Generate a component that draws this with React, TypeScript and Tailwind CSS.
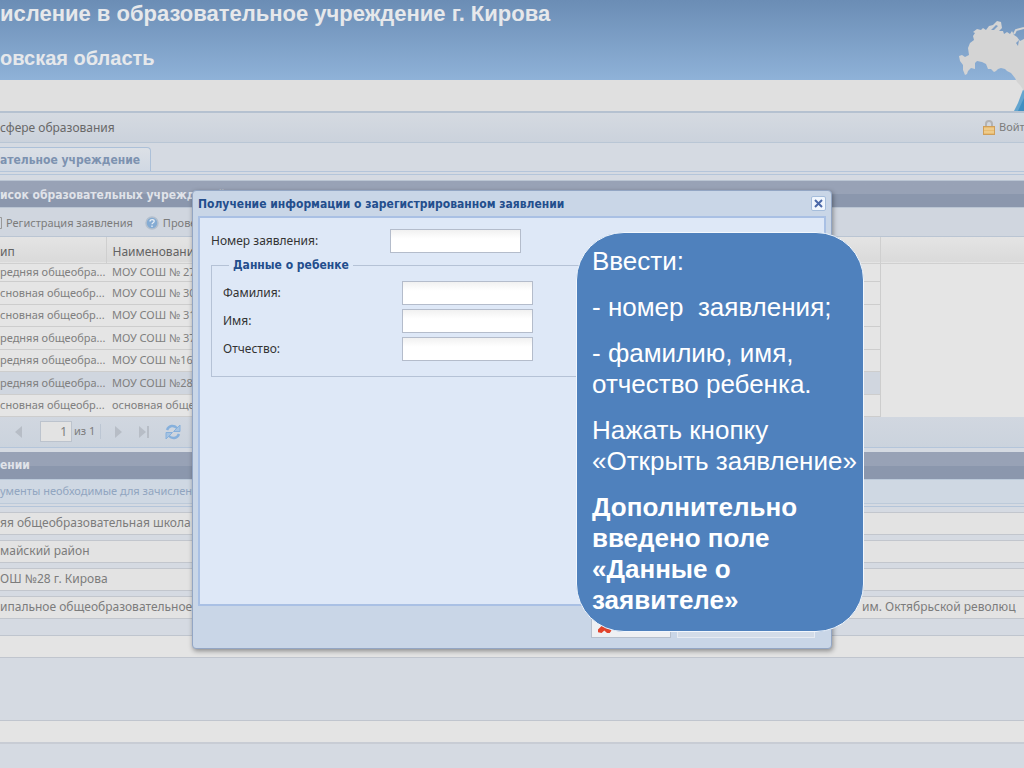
import * as React from "react";

const schools = [
  { type: "редняя общеобра...", name: "МОУ СОШ № 27" },
  { type: "сновная общеобр...", name: "МОУ СОШ № 30" },
  { type: "сновная общеобр...", name: "МОУ СОШ № 31" },
  { type: "редняя общеобра...", name: "МОУ СОШ № 37" },
  { type: "редняя общеобра...", name: "МОУ СОШ №16" },
  { type: "редняя общеобра...", name: "МОУ СОШ №28", selected: true },
  { type: "сновная общеобр...", name: "основная обще" },
];

const details = [
  { id: "kind", label: "Тип", value: "яя общеобразовательная школа" },
  { id: "district", label: "Район", value: "майский район" },
  { id: "short", label: "Краткое наименование", value: "ОШ №28 г. Кирова" },
  { id: "full", label: "Полное наименование", value: "ипальное общеобразовательное", rest: "им. Октябрьской революц" },
];

const childFields = [
  { id: "surname", label: "Фамилия:" },
  { id: "firstname", label: "Имя:" },
  { id: "patronymic", label: "Отчество:" },
];

const inputClass =
  "w-[131px] h-6 px-1 border border-[#b4bccb] bg-linear-to-b from-[#f1f1f1] to-white to-40% outline-none";

const boldClass = "text-xs font-bold font-['DejaVu_Sans_Condensed','DejaVu_Sans',sans-serif]";

function RussiaMap() {
  return (
    <svg className="absolute right-0 top-2.5" width="84" height="101" viewBox="0 0 84 101" aria-hidden="true">
      <path d="M74 101 78 93 81 85 84 77V101Z" fill="#63a5cf" />
      <path d="M78 101 84 88V101Z" fill="#3f8fc2" />
      <path
        d="M19 46 22 45 25 47 29 45 28 38 30 33 34 30 33 26 35 23 33 22 37 19 41 20 43 18 46 20 49 16 53 15 57 11 61 12 62 18 59 21 63 21 64 24 67 22 70 24 72 21 74 25 77 27 80 31 84 29V81L80 75 77 72 75 68 71 63 67 61 65 59 61 58 58 59 56 61 54 62 51 59 48 59 46 54 42 52 37 51 35 53 35 59 31 58 28 61 27 64 25 65 23 60 23 55 20 51Z"
        fill="#d4d4d4"
      />
      <path d="M51 20 56 15 58 16 54 20ZM76 33 79 30 78 36Z" fill="#7f9fc5" />
      <path d="M74 24 76 20 84 18" fill="none" stroke="#d4d4d4" strokeWidth="2" />
    </svg>
  );
}

function LockIcon() {
  return (
    <svg className="shrink-0" width="12" height="16" viewBox="0 0 12 16" aria-hidden="true">
      <path d="M3 8V4a3 3 0 0 1 6 0v4" fill="none" stroke="#b3b3b3" strokeWidth="2" />
      <rect x="0.5" y="6.5" width="11" height="8" fill="#e9bd72" stroke="#cf9f5b" />
      <path d="M1 9h10M1 12h10" stroke="#f3d9a4" />
    </svg>
  );
}

function HelpIcon() {
  return (
    <svg width="14" height="14" viewBox="0 0 14 14" aria-hidden="true">
      <circle cx="7" cy="7" r="6" fill="#84abd3" stroke="#b3bfcd" strokeWidth="1.5" />
      <path d="M5 5.500c0-2.600 4.200-2.400 4.200-.2C9.200 6.800 7 6.800 7 8.300M7 9.600v1.300" fill="none" stroke="#e8eef5" strokeWidth="1.300" />
    </svg>
  );
}

function RefreshIcon() {
  return (
    <svg width="16" height="16" viewBox="0 0 16 16" aria-hidden="true">
      <path d="M2 6C4 1 9 1 12 4" fill="none" stroke="#86b0dc" strokeWidth="2.400" />
      <path d="M15 1v6.500H8.500Z" fill="#a5c3e2" stroke="#86b0dc" />
      <path d="M14 10c-2 5-7 5-10 2" fill="none" stroke="#86b0dc" strokeWidth="2.400" />
      <path d="M1 15V8.500h6.500Z" fill="#a5c3e2" stroke="#86b0dc" />
    </svg>
  );
}

function PageArrow({ flip, end }: { flip?: boolean; end?: boolean }) {
  return (
    <svg className={flip ? "rotate-180" : ""} width="12" height="12" viewBox="0 0 12 12" aria-hidden="true">
      <path d="M2 0v12l7-6Z" fill="#b7bdc6" />
      {end && <path d="M10 0h2v12h-2Z" fill="#b7bdc6" />}
    </svg>
  );
}

function SchoolTable() {
  return (
    <table className="w-full table-fixed border-collapse text-left text-[11px] text-[#808080] bg-[#e5e5e5]">
      <colgroup>
        <col className="w-[106px]" />
        <col />
        <col className="w-[14%]" />
      </colgroup>
      <thead>
        <tr className="h-[26px] text-xs text-[#636363] bg-linear-to-b from-[#e4e4e4] to-[#dadada] border-b border-[#d0d0d0]">
          <th className="p-0 pt-1 font-normal border-r border-[#cfcfcf]">ип</th>
          <th className="px-1.5 pt-1 pb-0 font-normal border-r border-[#cfcfcf]">Наименование</th>
          <td />
        </tr>
      </thead>
      <tbody>
        {schools.map((s, i) => (
          <tr key={i} className="h-[22px] first:h-[18px] even:h-[23px] leading-[14px]">
            <td className={`p-0 border-b border-[#cdcdcd] whitespace-nowrap overflow-hidden ${s.selected ? "bg-[#d0d6df]" : ""}`}>{s.type}</td>
            <td className={`py-0 px-1.5 border-b border-r border-[#cdcdcd] whitespace-nowrap ${s.selected ? "bg-[#d0d6df]" : ""}`}>{s.name}</td>
            <td className="p-0" />
          </tr>
        ))}
      </tbody>
    </table>
  );
}

function Dialog() {
  return (
    <div
      role="dialog"
      aria-labelledby="dialog-title"
      className="absolute left-1/2 top-[190px] -translate-x-1/2 w-[640px] h-[459px] flex flex-col px-[5px] rounded-sm border border-[#93a6c4] bg-[#c9d6e7] shadow-[1px_2px_5px_rgba(0,0,0,0.4)]"
    >
      <div className="h-[25px] flex items-center justify-between">
        <h2 id="dialog-title" className={`${boldClass} text-[#234e8d]`}>
          Получение информации о зарегистрированном заявлении
        </h2>
        <button aria-label="Закрыть окно" className="size-[15px] flex items-center justify-center rounded-xs border border-[#a5bddb] bg-[#f0f6fd]">
          <svg width="9" height="9" viewBox="0 0 9 9" aria-hidden="true">
            <path d="M1 1 8 8M8 1 1 8" stroke="#4a68a8" strokeWidth="2" />
          </svg>
        </button>
      </div>
      <form className="flex-1 px-[11px] pt-[11px] border-2 border-[#a9c0e4] bg-[#dee8f7] text-xs text-[#333]">
        <div className="flex items-center">
          <label htmlFor="number" className="w-[179px]">Номер заявления:</label>
          <input id="number" className={inputClass} />
        </div>
        <fieldset className="border border-[#b5c2d6] px-[11px] pb-[15px] mt-1">
          <legend className={`ml-1.5 px-1 ${boldClass} text-[#234e8d]`}>Данные о ребенке</legend>
          <div className="flex flex-col gap-1 pt-2">
            {childFields.map((f) => (
              <div key={f.id} className="flex items-center">
                <label htmlFor={f.id} className="w-[179px]">{f.label}</label>
                <input id={f.id} className={inputClass} />
              </div>
            ))}
          </div>
        </fieldset>
      </form>
      <div className="h-[42px] pt-1.5 pr-[11px] flex justify-end gap-1.5 text-xs">
        <button className="w-20 h-[26px] flex items-center gap-1 px-1.5 border border-[#b6bfcc] bg-[#eef0f3] text-[#444]">
          <svg width="15" height="22" viewBox="0 0 15 22" aria-hidden="true">
            <path d="M1 4 5 2l3 5 3-5 3 2-4 8 5 5-2 3-3 0-3-3-3 3-4-1 0-3 4-4Z" fill="#e2432b" />
          </svg>
          Закрыть
        </button>
        <button className="w-[138px] h-[26px] border border-[#e6ebf2] bg-[#d3dce8] text-[#8d96a3]">Открыть заявление</button>
      </div>
    </div>
  );
}

function Callout() {
  return (
    <aside className="absolute left-[576px] top-[232px] w-[288px] h-[400px] px-[15px] pt-[13px] flex flex-col gap-[15px] rounded-[48px] border border-[#f2f7fd] bg-[#4f81bd] text-white text-[26px] leading-[31px] font-['Liberation_Sans',Arial,sans-serif]">
      <p>Ввести:</p>
      <p className="whitespace-pre">- номер  заявления;</p>
      <p>- фамилию, имя,<br />отчество ребенка.</p>
      <p className="whitespace-nowrap">Нажать кнопку<br />«Открыть заявление»</p>
      <p className="font-bold">Дополнительно<br />введено поле<br />«Данные о<br />заявителе»</p>
    </aside>
  );
}

export default function App() {
  return (
    <div className="relative min-h-screen overflow-hidden flex flex-col bg-[#d5dae2] whitespace-nowrap text-[#7c7c7c] text-xs font-['Noto_Sans',Tahoma,sans-serif]">
      <header className="relative border-b-2 border-[#b5c1d0] bg-[#e0e0e0] pb-[31px] font-['Liberation_Sans',Arial,sans-serif]">
        <div className="h-20 flex flex-col gap-[18px] bg-linear-to-b from-[#6b8db5] to-[#8fb2d8] text-[#e6e8eb] font-bold">
          <h1 className="text-[22px] leading-[27px]">исление в образовательное учреждение г. Кирова</h1>
          <p className="text-xl leading-[27px]">овская область</p>
        </div>
        <RussiaMap />
      </header>

      <nav className="h-[30px] flex items-center justify-between border-b border-[#b9c6d5] bg-linear-to-b from-[#d5dae1] to-[#cbd2dc]">
        <span className="text-[#686868]">сфере образования</span>
        <a href="#login" className="w-[41px] flex items-center gap-1 text-[11px]">
          <LockIcon />
          Войт
        </a>
      </nav>

      <div role="tablist" className="h-[29px] flex items-end border-b border-[#b4c5da]">
        <button role="tab" aria-selected="true" className={`h-6 pr-2.5 rounded-tr border-t border-r border-[#acc0d8] bg-linear-to-b from-[#dce0e6] to-[#d0d8e3] ${boldClass} text-[#7d92b0]`}>
          ательное учреждение
        </button>
      </div>

      <section className="mt-0.5 border-t border-[#b4c5da]">
        <h2 className={`mt-[5px] h-[28px] pt-0.5 flex items-center border-y border-[#bac5d3] bg-linear-to-b from-[#98a2b6] from-50% to-[#8b97ad] to-50% ${boldClass} text-[#e0e3e9]`}>
          исок образовательных учреждений
        </h2>
        <div className="h-[29px] pt-0.5 flex items-center gap-3 border-b border-[#bac5d3] bg-[#d0d6df] text-[11px]">
          <button className="flex items-center gap-1">
            <svg width="2" height="12" viewBox="0 0 2 12" aria-hidden="true">
              <path d="M0 .5h1.500v11H0" fill="none" stroke="#999" />
            </svg>
            Регистрация заявления
          </button>
          <button className="flex items-center gap-1">
            <HelpIcon />
            Проверить
          </button>
        </div>
        <SchoolTable />
        <div className="h-[31px] flex items-center border-b border-[#b4c5da] bg-linear-to-b from-[#d1d7e0] to-[#cbd3dd]">
          <button aria-label="Предыдущая страница" className="ml-3 mr-4"><PageArrow flip /></button>
          <input aria-label="Страница" defaultValue="1" className="w-8 h-[21px] pr-1 text-right bg-[#e3e3e3] border border-[#bcc3cd] outline-none" />
          <span className="w-[29px] pl-0.5 text-[11px] border-r border-[#bcc6d3]">из 1</span>
          <button aria-label="Следующая страница" className="ml-3 mr-3"><PageArrow /></button>
          <button aria-label="Последняя страница" className="mr-4"><PageArrow end /></button>
          <button aria-label="Обновить"><RefreshIcon /></button>
        </div>
      </section>

      <section className="mt-1 border-b border-[#bfc5ce] pb-4">
        <h2 className={`h-[27px] flex items-center bg-linear-to-b from-[#98a2b6] from-50% to-[#8b97ad] to-50% ${boldClass} text-[#e0e3e9]`}>ении</h2>
        <div className="h-[25px] flex items-center border-y border-[#bccada] bg-[#cfd8e3]">
          <button className="text-[11px] text-[#91a5c0]">ументы необходимые для зачислени</button>
        </div>
        <div className="mt-0.5 pt-[5px] flex flex-col gap-[5px] border-t border-[#b4c5da]">
          {details.map((d) => (
            <div key={d.id} className="h-[23px] flex items-center justify-between border-y border-[#c2c6cd] bg-[#e3e3e3]">
              <input aria-label={d.label} readOnly defaultValue={d.value} className="w-1/2 bg-transparent outline-none" />
              {d.rest && <span className="w-[162px]">{d.rest}</span>}
            </div>
          ))}
        </div>
      </section>
      <div className="h-[21px] bg-[#e4e4e4]" />
      <div className="h-16 border-y border-[#c0c5ce]" />
      <div className="h-[21px] bg-[#e4e4e4]" />
      <div className="flex-1 border-t-2 border-[#c8ccd4]" />

      <Dialog />
      <Callout />
    </div>
  );
}
